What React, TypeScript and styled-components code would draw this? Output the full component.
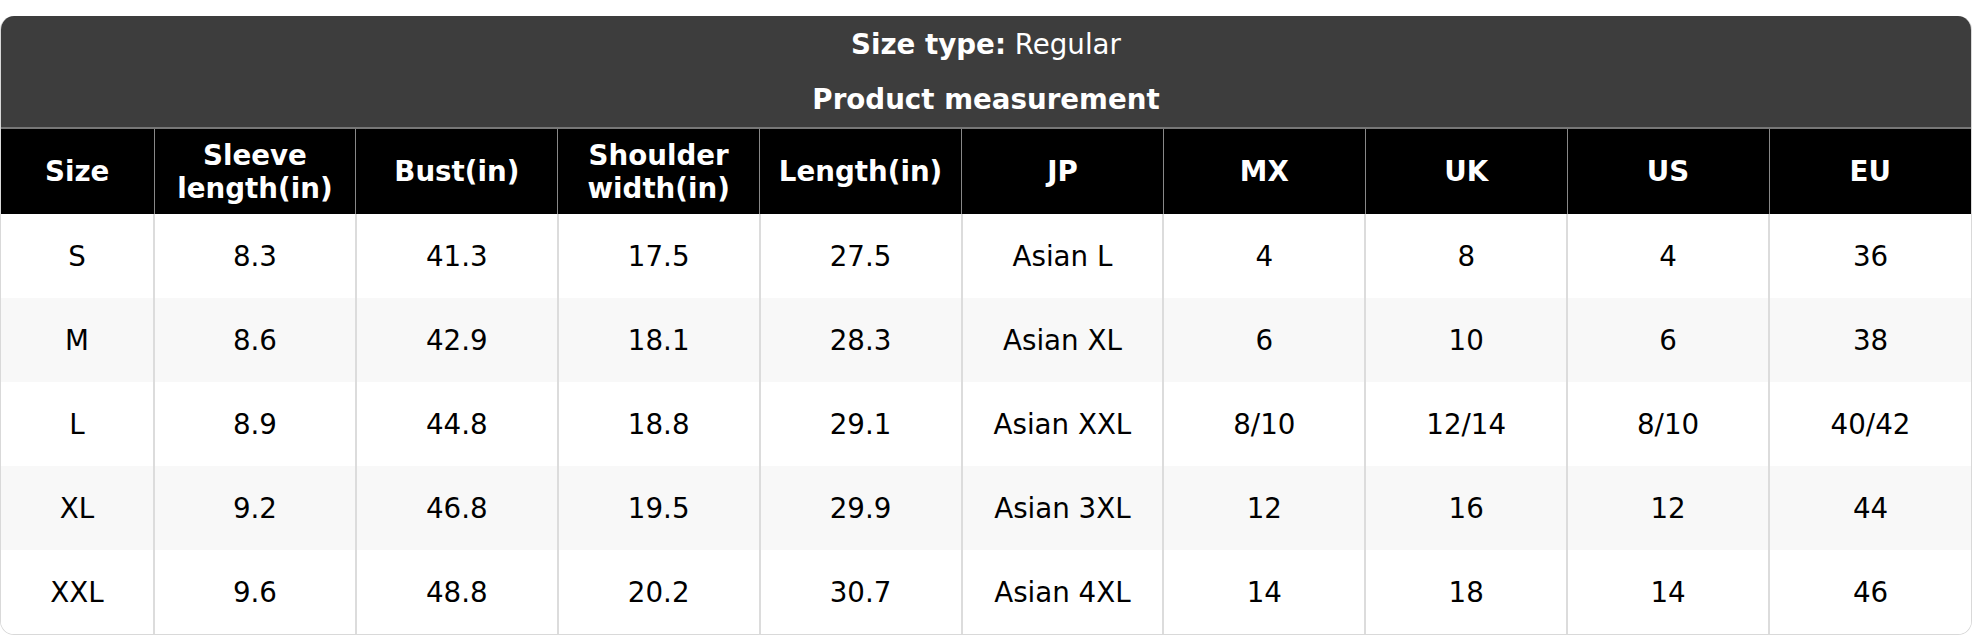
import React from "react";
import styled, { createGlobalStyle } from "styled-components";

type Row = {
	size: string;
	sleeve: string;
	bust: string;
	shoulder: string;
	length: string;
	jp: string;
	mx: string;
	uk: string;
	us: string;
	eu: string;
};

const columns: { key: keyof Row; label: React.ReactNode }[] = [
	{ key: "size", label: "Size" },
	{ key: "sleeve", label: <>Sleeve<br />length(in)</> },
	{ key: "bust", label: "Bust(in)" },
	{ key: "shoulder", label: <>Shoulder<br />width(in)</> },
	{ key: "length", label: "Length(in)" },
	{ key: "jp", label: "JP" },
	{ key: "mx", label: "MX" },
	{ key: "uk", label: "UK" },
	{ key: "us", label: "US" },
	{ key: "eu", label: "EU" },
];

const rows: Row[] = [
	{ size: "S", sleeve: "8.3", bust: "41.3", shoulder: "17.5", length: "27.5", jp: "Asian L", mx: "4", uk: "8", us: "4", eu: "36" },
	{ size: "M", sleeve: "8.6", bust: "42.9", shoulder: "18.1", length: "28.3", jp: "Asian XL", mx: "6", uk: "10", us: "6", eu: "38" },
	{ size: "L", sleeve: "8.9", bust: "44.8", shoulder: "18.8", length: "29.1", jp: "Asian XXL", mx: "8/10", uk: "12/14", us: "8/10", eu: "40/42" },
	{ size: "XL", sleeve: "9.2", bust: "46.8", shoulder: "19.5", length: "29.9", jp: "Asian 3XL", mx: "12", uk: "16", us: "12", eu: "44" },
	{ size: "XXL", sleeve: "9.6", bust: "48.8", shoulder: "20.2", length: "30.7", jp: "Asian 4XL", mx: "14", uk: "18", us: "14", eu: "46" },
];

const App: React.FC = () => {
	return (
		<>
			<GlobalStyle />
			<Card>
				<Table>
					<colgroup>
						<SizeCol />
						{columns.slice(1).map((c) => (
							<col key={c.key} />
						))}
					</colgroup>
					<thead>
						<TitleRow>
							<TitleCell colSpan={10}>
								<b>Size type:</b> Regular
							</TitleCell>
						</TitleRow>
						<TitleRow>
							<TitleCell colSpan={10}>
								<b>Product measurement</b>
							</TitleCell>
						</TitleRow>
						<HeadRow>
							{columns.map((c) => (
								<Th key={c.key}>{c.label}</Th>
							))}
						</HeadRow>
					</thead>
					<tbody>
						{rows.map((r, i) => (
							<BodyRow key={r.size} $striped={i % 2 === 1}>
								{columns.map((c) => (
									<Td key={c.key}>{r[c.key]}</Td>
								))}
							</BodyRow>
						))}
					</tbody>
				</Table>
			</Card>
		</>
	);
};

export default App;

/* ================= styled ================ */

const GlobalStyle = createGlobalStyle`
	html, body {
		margin: 0;
		padding: 0;
		background: #fff;
	}
	body {
		font-family: "DejaVu Sans", "Liberation Sans", sans-serif;
	}
`;

const Card = styled.div`
	margin-top: 16px;
	width: 1972px;
	box-sizing: border-box;
	border: 1px solid #d9d9d9;
	border-top: none;
	border-radius: 14px;
	overflow: hidden;
	background: #fff;
`;

const Table = styled.table`
	width: 100%;
	table-layout: fixed;
	border-collapse: collapse;
	font-size: 27.7px;
	text-align: center;
`;

const SizeCol = styled.col`
	width: 153px;
`;

const TitleRow = styled.tr`
	background: #3d3d3d;
	height: 56px;
`;

const TitleCell = styled.th`
	color: #fff;
	font-weight: 400;
	padding: 0;
	line-height: 33px;
	vertical-align: middle;

	b {
		font-weight: 700;
	}
`;

const HeadRow = styled.tr`
	background: #000;
	height: 86px;
	border-top: 2px solid #777;
`;

const Th = styled.th`
	color: #fff;
	font-weight: 700;
	line-height: 33px;
	padding: 0 4px;
	border-left: 1px solid #888;

	&:first-child {
		border-left: none;
	}
`;

const BodyRow = styled.tr<{ $striped: boolean }>`
	height: 84px;
	background: ${({ $striped }) => ($striped ? "#f8f8f8" : "#fff")};
`;

const Td = styled.td`
	color: #000;
	padding: 0 4px;
	border-left: 2px solid #dcdcdc;

	&:first-child {
		border-left: none;
	}
`;
